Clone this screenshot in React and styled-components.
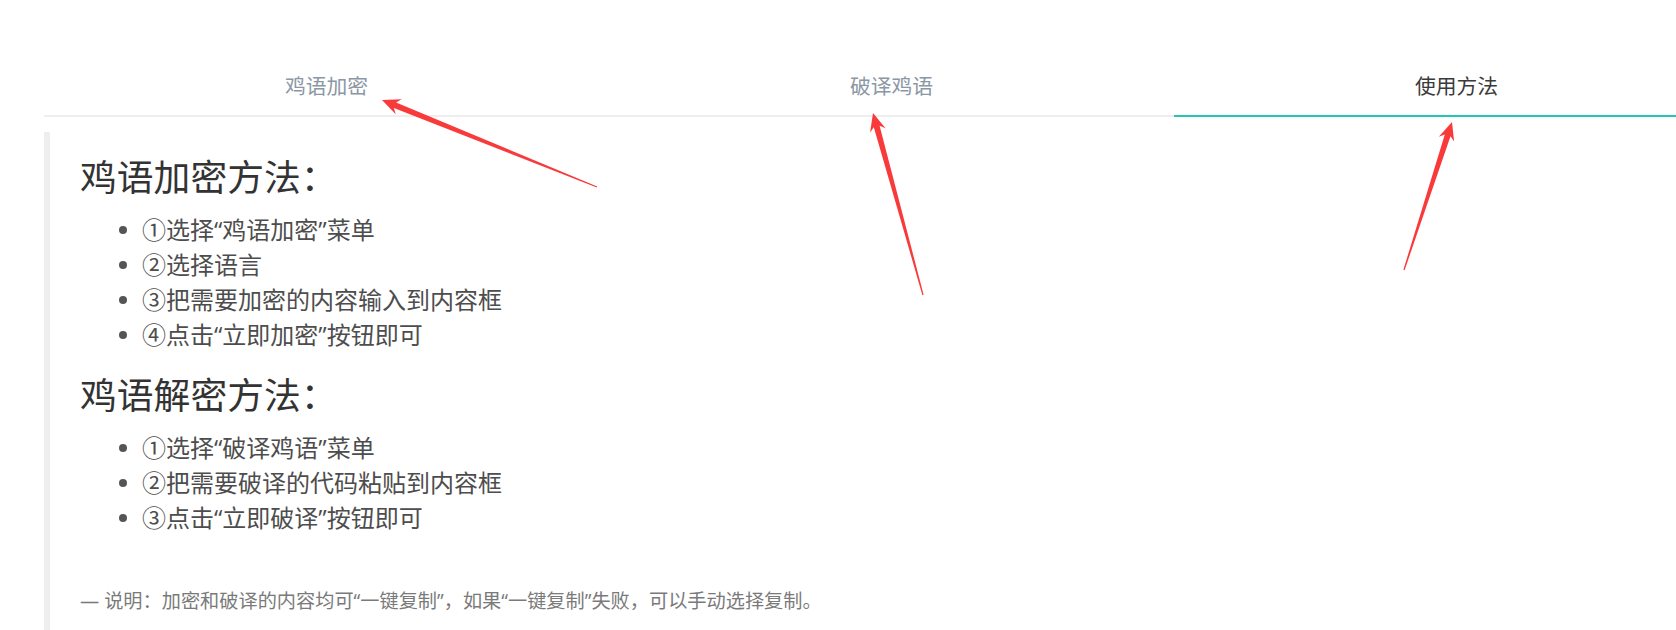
import React from 'react'
import styled, { createGlobalStyle } from 'styled-components'

const GlobalStyle = createGlobalStyle`
  html, body {
    margin: 0;
    padding: 0;
    overflow: hidden;
    background: #fff;
  }
  body {
    font-family: "Open Sans", "Noto Sans CJK SC", sans-serif;
  }
`

const Page = styled.div`
  position: relative;
  height: 630px;
  box-sizing: border-box;
  padding: 71px 0 0 44px;
  overflow: hidden;
`

const TabBar = styled.ul`
  display: grid;
  grid-template-columns: repeat(3, 565px);
  width: max-content;
  margin: 0;
  padding: 0;
  list-style: none;
  border-bottom: 2px solid #eeeeee;
`

const Tab = styled.li`
  text-align: center;
  font-size: 20.8px;
  line-height: 31px;
  padding-bottom: 13px;
  margin-bottom: -2px;
  cursor: pointer;
  color: ${p => (p.$active ? '#3a3a3a' : '#8b97a4')};
  border-bottom: 2px solid ${p => (p.$active ? '#22c7b4' : 'transparent')};
`

const Quote = styled.blockquote`
  display: flow-root;
  margin: 15px 0 0;
  padding: 2px 0 30px 30px;
  border-left: 6px solid #eeeeee;
`

const Heading = styled.h2`
  margin: 21px 0 13px;
  font-size: 36.8px;
  line-height: 44px;
  font-weight: normal;
  color: #333;
`

const Steps = styled.ul`
  margin: 0;
  padding-left: 62px;
  list-style: none;
`

const Step = styled.li`
  position: relative;
  font-size: 24px;
  line-height: 35px;
  color: #4d4d4d;

  &::before {
    content: '';
    position: absolute;
    left: -23px;
    top: 14px;
    width: 8px;
    height: 8px;
    border-radius: 50%;
    background: #555;
  }
`

const Note = styled.p`
  margin: 52px 0 0;
  font-size: 19.2px;
  line-height: 28px;
  color: #7a7a7a;
`

const Overlay = styled.svg`
  position: absolute;
  left: 0;
  top: 0;
  pointer-events: none;
`

const tabs = ['鸡语加密', '破译鸡语', '使用方法']

const encodeSteps = [
  '①选择“鸡语加密”菜单',
  '②选择语言',
  '③把需要加密的内容输入到内容框',
  '④点击“立即加密”按钮即可',
]

const decodeSteps = [
  '①选择“破译鸡语”菜单',
  '②把需要破译的代码粘贴到内容框',
  '③点击“立即破译”按钮即可',
]

// tapered annotation arrow, tail -> tip
const arrowPoints = (sx, sy, tx, ty) => {
  const dx = tx - sx
  const dy = ty - sy
  const len = Math.hypot(dx, dy)
  const ux = dx / len
  const uy = dy / len
  const nx = -uy
  const ny = ux
  const head = 18
  const wing = 8
  const neck = 3
  const tail = 0.6
  const bx = tx - ux * (head - 4)
  const by = ty - uy * (head - 4)
  const wx = tx - ux * head
  const wy = ty - uy * head
  const pts = [
    [sx + nx * tail, sy + ny * tail],
    [bx + nx * neck, by + ny * neck],
    [wx + nx * wing, wy + ny * wing],
    [tx, ty],
    [wx - nx * wing, wy - ny * wing],
    [bx - nx * neck, by - ny * neck],
    [sx - nx * tail, sy - ny * tail],
  ]
  return pts.map(p => p.map(v => v.toFixed(1)).join(',')).join(' ')
}

const arrows = [
  [597, 187, 382, 100],
  [923, 295, 873, 113],
  [1404, 270, 1452, 122],
]

const App = () => {
  return (
    <>
      <GlobalStyle />
      <Page>
        <TabBar>
          {tabs.map((t, i) => (
            <Tab key={t} $active={i === 2}>{t}</Tab>
          ))}
        </TabBar>
        <Quote>
          <Heading>鸡语加密方法：</Heading>
          <Steps>
            {encodeSteps.map(s => <Step key={s}>{s}</Step>)}
          </Steps>
          <Heading>鸡语解密方法：</Heading>
          <Steps>
            {decodeSteps.map(s => <Step key={s}>{s}</Step>)}
          </Steps>
          <Note>— 说明：加密和破译的内容均可“一键复制”，如果“一键复制”失败，可以手动选择复制。</Note>
        </Quote>
        <Overlay width="1676" height="630" viewBox="0 0 1676 630">
          {arrows.map((a, i) => (
            <polygon key={i} points={arrowPoints(...a)} fill="#f93a3a" />
          ))}
        </Overlay>
      </Page>
    </>
  )
}

export default App
